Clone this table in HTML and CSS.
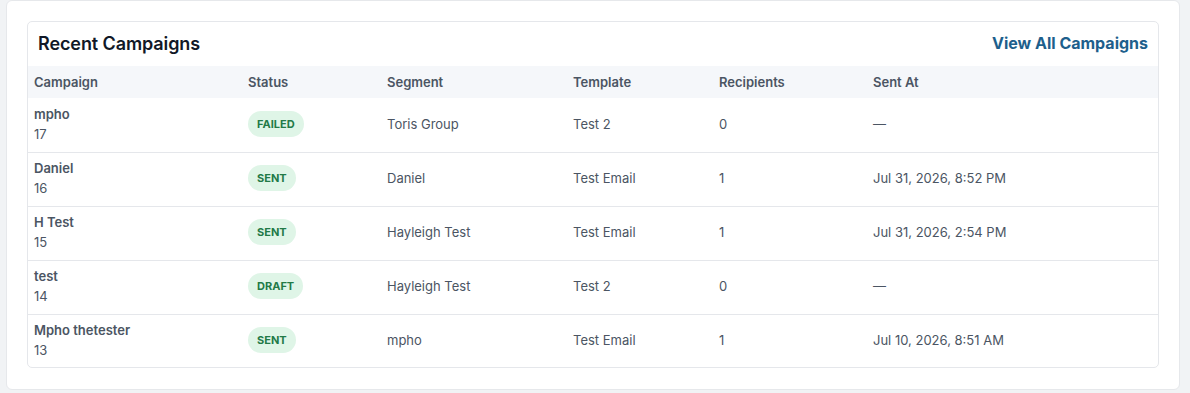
FILE: index.html
```html
<!DOCTYPE html>
<html lang="en">
<head>
<meta charset="utf-8">
<title>Recent Campaigns</title>
<link rel="stylesheet" href="styles.css">
</head>
<body>
<div class="page">
  <section class="outer">
    <div class="card">
      <div class="card-head">
        <h2 class="title">Recent Campaigns</h2>
        <a class="view-all" href="#">View All Campaigns</a>
      </div>
      <table class="tbl">
        <colgroup>
          <col class="c1"><col class="c2"><col class="c3"><col class="c4"><col class="c5"><col class="c6">
        </colgroup>
        <thead>
          <tr><th>Campaign</th><th>Status</th><th>Segment</th><th>Template</th><th>Recipients</th><th>Sent At</th></tr>
        </thead>
        <tbody>
          <tr>
            <td><div class="name">mpho</div><div class="cid">17</div></td>
            <td><span class="badge">FAILED</span></td>
            <td>Toris Group</td><td>Test 2</td><td>0</td><td>—</td>
          </tr>
          <tr>
            <td><div class="name">Daniel</div><div class="cid">16</div></td>
            <td><span class="badge">SENT</span></td>
            <td>Daniel</td><td>Test Email</td><td>1</td><td>Jul 31, 2026, 8:52 PM</td>
          </tr>
          <tr>
            <td><div class="name">H Test</div><div class="cid">15</div></td>
            <td><span class="badge">SENT</span></td>
            <td>Hayleigh Test</td><td>Test Email</td><td>1</td><td>Jul 31, 2026, 2:54 PM</td>
          </tr>
          <tr>
            <td><div class="name">test</div><div class="cid">14</div></td>
            <td><span class="badge">DRAFT</span></td>
            <td>Hayleigh Test</td><td>Test 2</td><td>0</td><td>—</td>
          </tr>
          <tr>
            <td><div class="name">Mpho thetester</div><div class="cid">13</div></td>
            <td><span class="badge">SENT</span></td>
            <td>mpho</td><td>Test Email</td><td>1</td><td>Jul 10, 2026, 8:51 AM</td>
          </tr>
        </tbody>
      </table>
    </div>
  </section>
</div>
</body>
</html>
```
FILE: styles.css
```css
* { box-sizing: border-box; }
html, body { margin: 0; padding: 0; }
body {
  background: #f1f3f5;
  font-family: Inter, "Liberation Sans", Arial, sans-serif;
  color: #4b5563;
}
.page {
  padding: 0 10px 3px 6px;
}
.outer {
  background: #ffffff;
  border: 1px solid #e6e8eb;
  border-radius: 6px;
  padding: 20px;
  height: 390px;
}
.card {
  border: 1px solid #e5e7eb;
  border-radius: 5px;
  overflow: hidden;
}
.card-head {
  display: flex;
  align-items: center;
  justify-content: space-between;
  height: 44px;
  padding: 0 10px 2px 10px;
}
.title {
  margin: 0;
  font-size: 18px;
  font-weight: 600;
  color: #111827;
  letter-spacing: -0.1px;
}
.view-all {
  font-size: 16px;
  font-weight: 700;
  color: #1d5f8c;
  text-decoration: none;
}
.tbl {
  width: 100%;
  border-collapse: collapse;
  table-layout: fixed;
  font-size: 13px;
}
.c1 { width: 214px; }
.c2 { width: 139px; }
.c3 { width: 186px; }
.c4 { width: 146px; }
.c5 { width: 154px; }
.tbl th {
  background: #f5f7fa;
  text-align: left;
  font-weight: 600;
  color: #4b5563;
  height: 32px;
  padding: 0 6px;
}
.tbl td {
  padding: 5px 6px 7px;
  height: 54px;
  color: #4b5563;
  border-bottom: 1px solid #e5e7eb;
  vertical-align: middle;
}
.tbl tbody tr:last-child td { border-bottom: none; height: 53px; }
.name {
  font-weight: 600;
  color: #4b5563;
  line-height: 20px;
}
.cid {
  line-height: 20px;
  color: #4b5563;
}
.badge {
  display: inline-block;
  background: #dff5e7;
  color: #237a47;
  font-size: 11px;
  font-weight: 700;
  line-height: 26px;
  padding: 0 9px;
  border-radius: 13px;
}
```
